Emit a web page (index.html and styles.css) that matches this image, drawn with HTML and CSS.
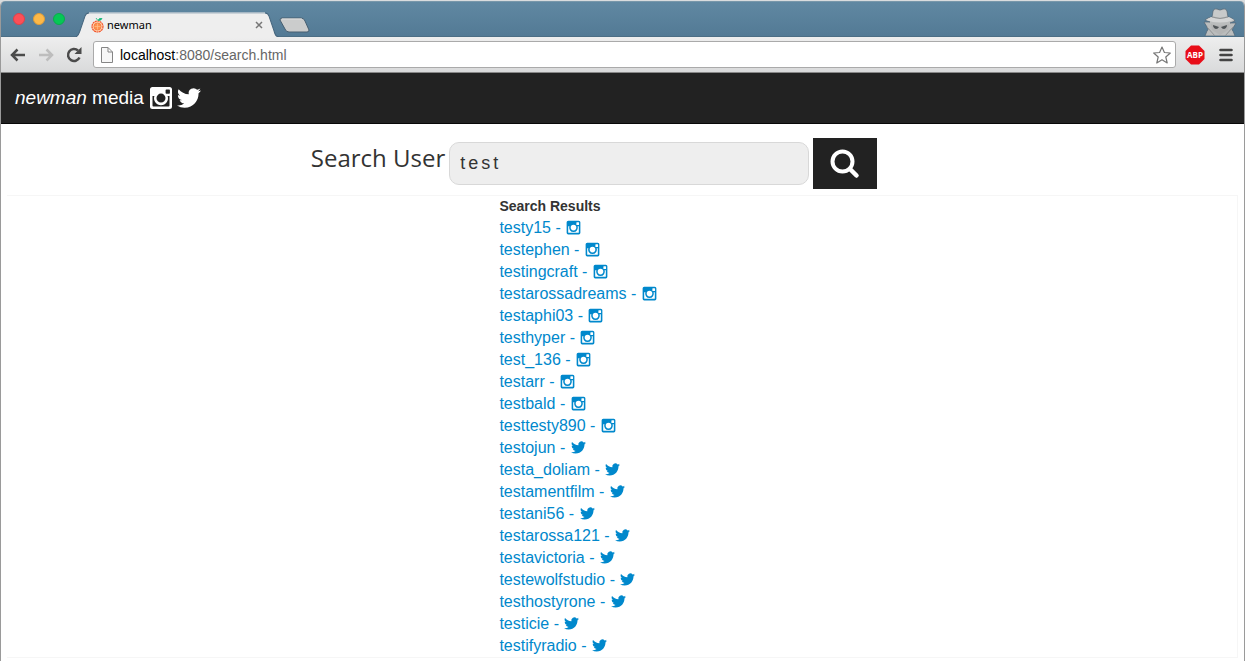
FILE: index.html
```html
<!DOCTYPE html>
<html lang="en">
<head>
<meta charset="utf-8">
<title>newman</title>
<link rel="stylesheet" href="styles.css">
</head>
<body>
<svg width="0" height="0" class="sprites" aria-hidden="true">
  <symbol id="instagram" viewBox="0 0 24 24">
    <path fill-rule="evenodd" d="M3.500 1H20.500a2.500 2.500 0 0 1 2.500 2.500V20.500a2.500 2.500 0 0 1-2.500 2.500H3.500a2.500 2.500 0 0 1-2.500-2.500V3.500a2.500 2.500 0 0 1 2.500-2.500ZM17.400 3.500a.8.8 0 0 0-.8.8V7a.8.8 0 0 0 .8.8h2.700A.8.8 0 0 0 20.900 7V4.300a.8.8 0 0 0-.8-.8ZM3.500 10V19.600a.9.9 0 0 0 .9.9H19.600a.9.9 0 0 0 .9-.9V10H18.600A7 7 0 1 1 5.400 10ZM12 7.600a4.500 4.500 0 1 0 0 9a4.500 4.500 0 1 0 0-9Z"/>
  </symbol>
  <symbol id="twitter" viewBox="0 0 24 24">
    <path d="M23.950 4.570a10 10 0 0 1-2.820.770 4.960 4.960 0 0 0 2.160-2.720c-.950.550-2.010.950-3.130 1.180a4.920 4.920 0 0 0-8.380 4.480C7.690 8.100 4.070 6.130 1.640 3.160a4.820 4.820 0 0 0-.670 2.480c0 1.710.870 3.210 2.190 4.100a4.900 4.900 0 0 1-2.230-.620v.060a4.920 4.920 0 0 0 3.950 4.830 5 5 0 0 1-2.210.080 4.940 4.940 0 0 0 4.600 3.420A9.870 9.870 0 0 1 0 19.540a13.990 13.990 0 0 0 7.550 2.210c9.050 0 14-7.500 14-13.980 0-.210 0-.420-.020-.630a9.940 9.940 0 0 0 2.460-2.550z"/>
  </symbol>
</svg>
<div class="window">
  <div class="titlebar">
    <div class="lights">
      <button class="light close" aria-label="Close window"></button>
      <button class="light minimise" aria-label="Minimise window"></button>
      <button class="light maximise" aria-label="Maximise window"></button>
    </div>
    <div class="tab">
      <svg class="tab-shape" viewBox="0 0 204 24" preserveAspectRatio="none" aria-hidden="true"><path d="M0 24C3 24 4 21 5 18L10 4Q11 1 14 1H190Q193 1 194 4L199 18C200 22 201 24 204 24" fill="#eee" stroke="#47677f"/><path d="M14 1H190" stroke="#fafafa"/></svg>
      <svg class="favicon" width="13" height="16" viewBox="0 0 13 16" aria-hidden="true"><circle cx="6.500" cy="9.500" r="5.500" fill="#ffd0ad" stroke="#f2552c" stroke-width="1.200" stroke-dasharray="2 .5"/><circle cx="6.500" cy="9.500" r="3.500" fill="#ff914d" stroke="#f58046"/><path d="M6.500 6.500v6M3.500 9.500h6" stroke="#ffc08d" stroke-width=".7"/><path d="M7 3.500Q8 .5 11 1.500Q10 4 7 3.500M6.500 3 5 1" fill="#18b779" stroke="#18b779" stroke-width=".8"/></svg>
      <span class="tab-title">newman</span>
      <button class="tab-close" aria-label="Close tab"><svg width="8" height="8" viewBox="0 0 8 8"><path d="M1 1 7 7M7 1 1 7" stroke="#777" stroke-width="1.500"/></svg></button>
    </div>
    <button class="new-tab" aria-label="New tab"><svg width="32" height="16" viewBox="0 0 32 16"><path d="M3 1H22Q25 1 26 4L30 13Q30 15 28 15H10Q7 15 6 12L1 3Q1 1 3 1Z" fill="#cbcccc" stroke="#465e70"/><path d="M3 2H23" stroke="#ddd"/></svg></button>
    <svg class="incognito" width="34" height="28" viewBox="0 0 34 28" aria-hidden="true"><path d="M9 9 10 3Q11 0 14 1L17 2 20 1Q23 0 24 3L25 9Q31 10 32 13L27 15 33 15 30 20Q28 22 30 23L32 28H2L4 23Q6 22 4 19L1 14H7L2 12Q5 9 9 9Z" fill="#bbbdbd" stroke="#526675" stroke-width=".7"/><path d="M10 8 11 3Q12 1 14 2L17 3 20 2Q22 1 23 3L24 8Q17 11 10 8Z" fill="#c8caca"/><path d="M8 9Q17 13 26 9L31 12Q17 17 3 12Z" fill="#d4d5d5"/><path d="M8 16Q17 19 26 16L25 22 17 27 9 22Z" fill="#b4b5b5"/><path d="M10 17 16 19Q15 21 13 21Q10 20 10 17M18 19 24 17Q24 20 21 21Q19 21 18 19" fill="#505558"/><path d="M4 19 12 28M30 19 22 28M9 9Q17 12 25 9" fill="none" stroke="#909395"/></svg>
  </div>
  <div class="toolbar">
    <button class="nav" aria-label="Back"><svg width="16" height="14" viewBox="0 0 16 14"><path d="M15 7H2M7.500 1.500 2 7 7.500 12.500" fill="none" stroke="#4b4b4b" stroke-width="2.500"/></svg></button>
    <button class="nav" aria-label="Forward"><svg width="16" height="14" viewBox="0 0 16 14"><path d="M1 7H14M8.500 1.500 14 7 8.500 12.500" fill="none" stroke="#bdbdbd" stroke-width="2.500"/></svg></button>
    <button class="nav" aria-label="Reload"><svg width="16" height="16" viewBox="0 0 16 16"><path d="M13.500 10.500A6 6 0 1 1 12 3.500" fill="none" stroke="#4b4b4b" stroke-width="2.500"/><path d="M15.500 0V7H8.500Z" fill="#4b4b4b"/></svg></button>
    <div class="address">
      <svg width="12" height="16" viewBox="0 0 12 16" aria-hidden="true"><path d="M.5.5H7L11.500 5V15.500H.5ZM7 .5V5H11.500" fill="#f7f7f7" stroke="#858585"/></svg>
      <span class="url"><span class="host">localhost</span>:8080/search.html</span>
      <button class="star" aria-label="Bookmark"><svg width="18" height="18" viewBox="0 0 18 18"><path d="M9 1 11.400 6.500 17.300 7 12.800 11 14.200 17 9 13.800 3.800 17 5.200 11 .7 7 6.600 6.500Z" fill="#fff" stroke="#777" stroke-width="1.200" stroke-linejoin="round"/></svg></button>
    </div>
    <button class="abp" aria-label="Adblock Plus"><svg width="20" height="20" viewBox="0 0 20 20"><path d="M6 .5H14L19.500 6V14L14 19.500H6L.5 14V6Z" fill="#e80d18"/><text x="10" y="13" text-anchor="middle" class="abp-text">ABP</text></svg></button>
    <button class="menu" aria-label="Menu"><svg width="14" height="14" viewBox="0 0 14 14"><path d="M1.500 2H12.500M1.500 7H12.500M1.500 12H12.500" stroke="#444" stroke-width="2.600" stroke-linecap="round"/></svg></button>
  </div>
  <header class="site-header">
    <span class="brand"><em>newman</em> media</span>
    <svg class="brand-icon"><use href="#instagram"/></svg>
    <svg class="brand-icon bird"><use href="#twitter"/></svg>
  </header>
  <main class="page">
    <form class="search">
      <label for="user">Search User</label>
      <input id="user" type="text" value="test">
      <button class="go" type="button" aria-label="Search"><svg width="30" height="30" viewBox="0 0 30 30"><circle cx="12.500" cy="12.500" r="10" fill="none" stroke="#fff" stroke-width="4"/><path d="M20 20 26.500 26.500" stroke="#fff" stroke-width="4.500" stroke-linecap="round"/></svg></button>
    </form>
    <section class="results">
      <h1>Search Results</h1>
      <ul>
        <li><a href="#">testy15 - <svg><use href="#instagram"/></svg></a></li>
        <li><a href="#">testephen - <svg><use href="#instagram"/></svg></a></li>
        <li><a href="#">testingcraft - <svg><use href="#instagram"/></svg></a></li>
        <li><a href="#">testarossadreams - <svg><use href="#instagram"/></svg></a></li>
        <li><a href="#">testaphi03 - <svg><use href="#instagram"/></svg></a></li>
        <li><a href="#">testhyper - <svg><use href="#instagram"/></svg></a></li>
        <li><a href="#">test_136 - <svg><use href="#instagram"/></svg></a></li>
        <li><a href="#">testarr - <svg><use href="#instagram"/></svg></a></li>
        <li><a href="#">testbald - <svg><use href="#instagram"/></svg></a></li>
        <li><a href="#">testtesty890 - <svg><use href="#instagram"/></svg></a></li>
        <li><a href="#">testojun - <svg><use href="#twitter"/></svg></a></li>
        <li><a href="#">testa_doliam - <svg><use href="#twitter"/></svg></a></li>
        <li><a href="#">testamentfilm - <svg><use href="#twitter"/></svg></a></li>
        <li><a href="#">testani56 - <svg><use href="#twitter"/></svg></a></li>
        <li><a href="#">testarossa121 - <svg><use href="#twitter"/></svg></a></li>
        <li><a href="#">testavictoria - <svg><use href="#twitter"/></svg></a></li>
        <li><a href="#">testewolfstudio - <svg><use href="#twitter"/></svg></a></li>
        <li><a href="#">testhostyrone - <svg><use href="#twitter"/></svg></a></li>
        <li><a href="#">testicie - <svg><use href="#twitter"/></svg></a></li>
        <li><a href="#">testifyradio - <svg><use href="#twitter"/></svg></a></li>
      </ul>
    </section>
  </main>
</div>
</body>
</html>
```

FILE: styles.css
```css
* { box-sizing: border-box; }
body {
  margin: 0;
  background: #d9dcde;
  font-family: "Liberation Sans", Arial, sans-serif;
  color: #333;
}
button { margin: 0; padding: 0; border: 0; background: none; }
svg { display: block; flex: none; }
.sprites { position: absolute; }
.window {
  min-height: calc(100vh - 1px);
  margin-top: 1px;
  border: solid #9a9a9a;
  border-width: 0 1px;
  border-radius: 5px 5px 0 0;
  background: #fff;
  overflow: hidden;
}
.titlebar {
  display: flex;
  align-items: flex-end;
  height: 36px;
  padding: 0 7px 0 12px;
  background: linear-gradient(#6088a2, #537a95);
  border-top: 1px solid #7897aa;
  border-bottom: 1px solid #4c6e85;
}
.lights { display: flex; gap: 8px; align-self: center; width: 62px; }
.light { width: 12px; height: 12px; border-radius: 50%; }
.close { background: #fd4f57; border: 1px solid #df4149; }
.minimise { background: #fdb948; border: 1px solid #df9d38; }
.maximise { background: #05c856; border: 1px solid #0aab4b; }
.tab {
  position: relative;
  display: flex;
  align-items: center;
  width: 204px;
  height: 25px;
  margin-bottom: -1px;
  padding: 0 16px 0 16px;
}
.tab-shape { position: absolute; inset: 0; width: 100%; height: 100%; }
.favicon, .tab-title, .tab-close { position: relative; }
.tab-title {
  flex: 1;
  margin-left: 3px;
  font: 11px "Noto Sans", sans-serif;
  color: #000;
}
.new-tab { margin-bottom: 3px; }
.incognito { margin-left: auto; }
.toolbar {
  display: flex;
  align-items: center;
  height: 36px;
  padding: 0 10px 0 8px;
  background: linear-gradient(#eee, #d9dadb);
  border-bottom: 1px solid #888;
}
.nav { width: 28px; padding-left: 1px; }
.address {
  flex: 1;
  display: flex;
  align-items: center;
  height: 27px;
  padding: 0 4px 0 7px;
  background: #fff;
  border: 1px solid #aaa;
  border-radius: 3px;
}
.url { flex: 1; margin-left: 7px; font-size: 14px; color: #666; }
.host { color: #000; }
.abp { margin: 0 14px 0 9px; }
.abp-text { font: bold 8px "Open Sans", sans-serif; fill: #fff; }
.menu { margin-right: 1px; }
.site-header {
  display: flex;
  align-items: center;
  height: 51px;
  padding-left: 14px;
  background: #222;
  border-bottom: 1px solid #080808;
  color: #fff;
}
.brand { margin-right: 5px; font-size: 19px; }
.brand-icon { width: 24px; height: 24px; fill: #fff; }
.bird { margin-left: 4px; }
.page { padding: 14px 6px 0; }
.search {
  display: flex;
  align-items: center;
  gap: 4px;
  height: 51px;
  margin: 0 -6px 6px;
  padding-left: 25%;
}
.search label {
  margin-bottom: 12px;
  padding-left: 2px;
  font: 24px/30px "Open Sans", sans-serif;
  white-space: nowrap;
}
.search input {
  width: 360px;
  height: 43px;
  padding: 0 10px;
  background: #eee;
  border: 1px solid #d8d8d8;
  border-radius: 10px;
  font: 18px "Liberation Sans", sans-serif;
  letter-spacing: 3px;
  color: #333;
}
.go {
  display: flex;
  align-items: center;
  justify-content: center;
  width: 64px;
  height: 51px;
  background: #222;
}
.results {
  padding-left: 40%;
  border: solid #f6f6f6;
  border-width: 1px 1px 1px 0;
}
.results h1 { margin: 0; font-size: 14px; line-height: 21px; }
.results ul { margin: 0; padding: 0; list-style: none; }
.results li { height: 22px; line-height: 22px; }
.results a { color: #0088cc; font-size: 16px; text-decoration: none; }
.results a svg {
  display: inline-block;
  width: 15px;
  height: 15px;
  margin-left: 1px;
  vertical-align: -2px;
  fill: currentColor;
}
```
